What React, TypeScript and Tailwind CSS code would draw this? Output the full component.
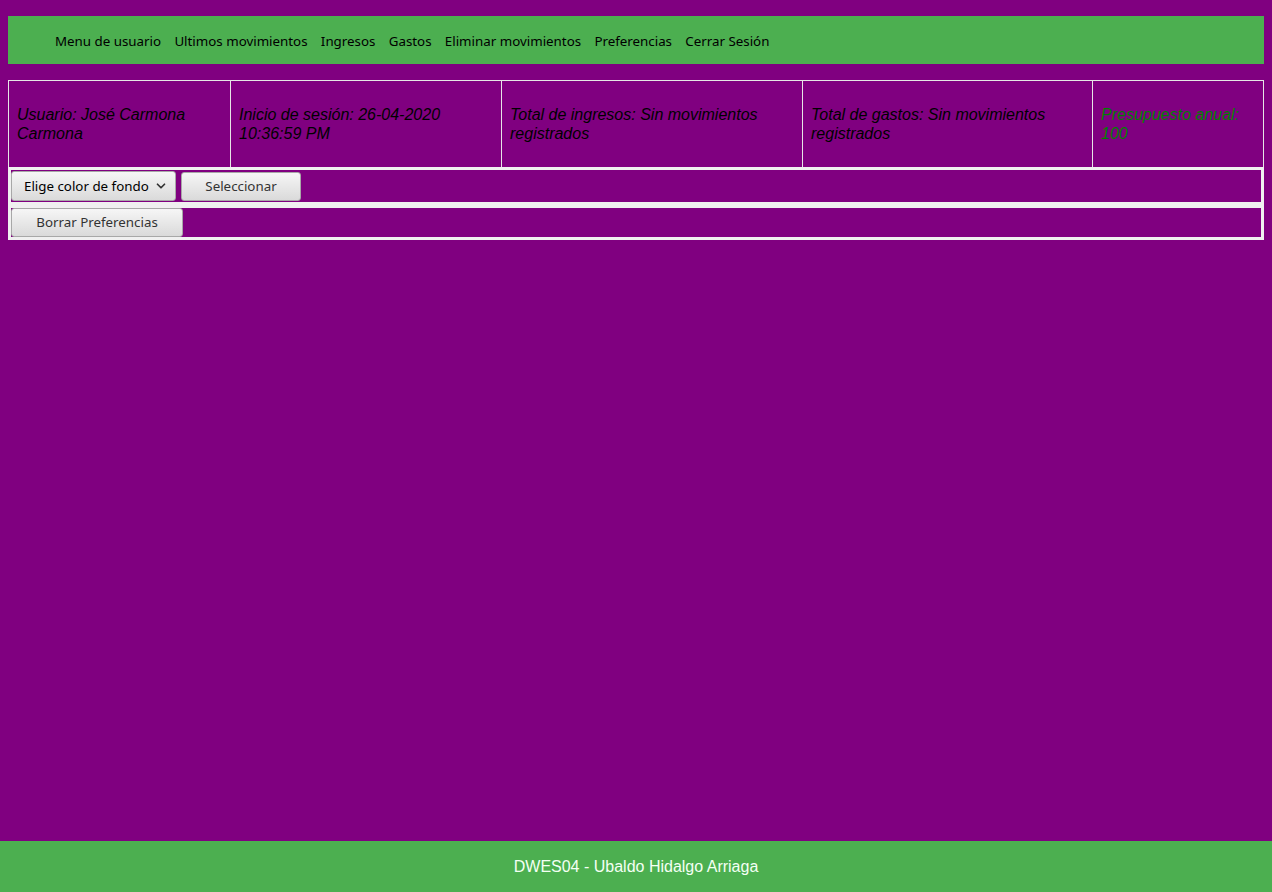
import { ChevronDown } from 'lucide-react'

const navItems = [
  'Menu de usuario',
  'Ultimos movimientos',
  'Ingresos',
  'Gastos',
  'Eliminar movimientos',
  'Preferencias',
  'Cerrar Sesión',
]

const btn =
  "flex items-center justify-center border border-[#a8a8a8] rounded-[3px] bg-gradient-to-b from-[#f6f6f6] to-[#dadada] text-[13.33px] text-[#333] font-['Noto_Sans',sans-serif]"

export default function App() {
  return (
    <div className="min-h-screen bg-[#800080] flex flex-col">
      <div className="px-2 pt-4">
        {/* Menu */}
        <nav className="h-12 bg-[#4caf50] flex items-center pl-[47px] pt-[3px] gap-[13.3px] font-['Noto_Sans',sans-serif] text-[13.33px] text-black">
          {navItems.map((item) => (
            <span key={item}>{item}</span>
          ))}
        </nav>

        {/* Datos */}
        <div className="mt-4 font-['Liberation_Sans',Arial,sans-serif] italic text-base leading-[19px]">
          <div className="flex h-[87px] border border-b-0 border-[#e6e6e6]">
            <div className="w-[222px] border-r border-[#e6e6e6] px-2 flex items-center text-black">
              <p>Usuario: José Carmona Carmona</p>
            </div>
            <div className="w-[271px] border-r border-[#e6e6e6] px-2 flex items-center text-black">
              <p>Inicio de sesión: 26-04-2020 10:36:59 PM</p>
            </div>
            <div className="w-[301px] border-r border-[#e6e6e6] px-2 flex items-center text-black">
              <p>Total de ingresos: Sin movimientos registrados</p>
            </div>
            <div className="w-[290px] border-r border-[#e6e6e6] px-2 flex items-center text-black">
              <p>Total de gastos: Sin movimientos registrados</p>
            </div>
            <div className="flex-1 px-2 flex items-center text-[#008000]">
              <p>Presupuesto anual: 100</p>
            </div>
          </div>

          {/* Preferencias */}
          <div className="bg-[#f0f0f0] p-[3px] flex flex-col gap-[6px] not-italic">
            <div className="h-[32px] bg-[#800080] flex items-center gap-[5px]">
              <div className={`${btn} w-[165px] h-[30px] justify-start pl-[12px] pr-[7px] text-black`}>
                <span>Elige color de fondo</span>
                <ChevronDown size={14} strokeWidth={3} className="ml-auto text-[#333]" />
              </div>
              <button className={`${btn} w-[120px] h-[29px]`}>Seleccionar</button>
            </div>
            <div className="h-[29px] bg-[#800080] flex items-center">
              <button className={`${btn} w-[172px] h-[29px]`}>Borrar Preferencias</button>
            </div>
          </div>
        </div>
      </div>

      <footer className="mt-auto h-[51px] bg-[#4caf50] flex items-center justify-center font-['Liberation_Sans',Arial,sans-serif] text-base text-[#f4fff4]">
        DWES04 - Ubaldo Hidalgo Arriaga
      </footer>
    </div>
  )
}
